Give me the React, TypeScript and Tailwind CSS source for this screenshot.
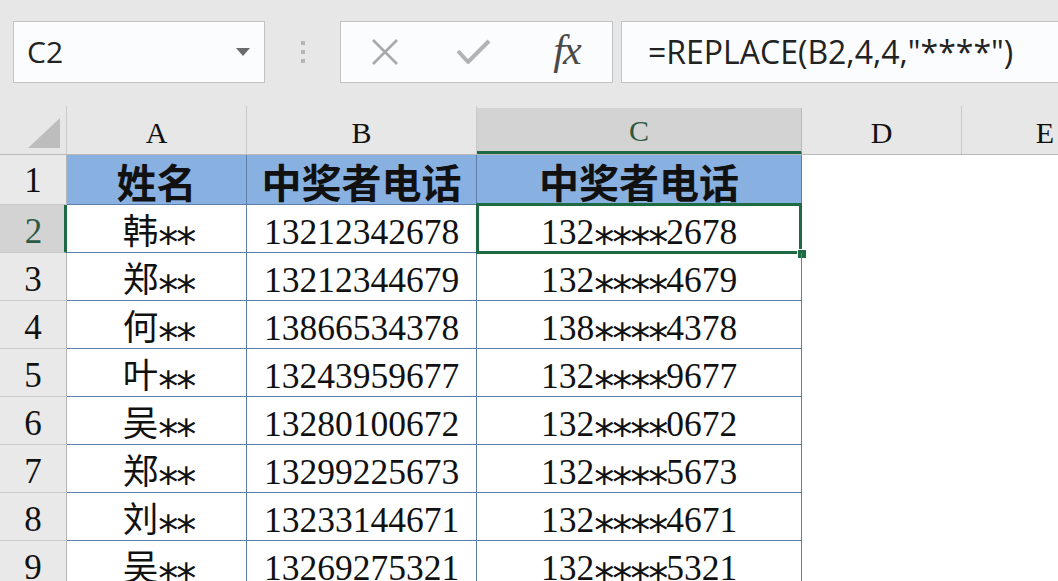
import React from "react";

const rows = [
  ["2", "韩**", "13212342678", "132****2678"],
  ["3", "郑**", "13212344679", "132****4679"],
  ["4", "何**", "13866534378", "138****4378"],
  ["5", "叶**", "13243959677", "132****9677"],
  ["6", "吴**", "13280100672", "132****0672"],
  ["7", "郑**", "13299225673", "132****5673"],
  ["8", "刘**", "13233144671", "132****4671"],
  ["9", "吴**", "13269275321", "132****5321"],
];

const serif = "font-['Liberation_Serif','Noto_Sans_CJK_SC',serif]";

function Toolbar() {
  return (
    <div className="h-[106px] shrink-0 bg-[#e7e7e7] flex items-start pt-[21px] pl-[13px]">
      <div className="w-[252px] h-[62px] bg-[#fbfcfd] border border-[#c3c3c3] flex items-center justify-between pl-[13px] pr-[14px]">
        <span className="font-['Open_Sans',sans-serif] text-[30px] text-[#222] leading-none">C2</span>
        <svg width="14" height="8" viewBox="0 0 14 8">
          <path d="M0 0 H14 L7 8 Z" fill="#6b6b6b" />
        </svg>
      </div>
      <div className="w-[75px] h-[62px] flex flex-col items-center justify-center gap-[5px]">
        <div className="w-[4px] h-[4px] bg-[#b5b5b5]" />
        <div className="w-[4px] h-[4px] bg-[#b5b5b5]" />
        <div className="w-[4px] h-[4px] bg-[#b5b5b5]" />
      </div>
      <div className="w-[273px] h-[62px] bg-[#fbfcfd] border border-[#c3c3c3] flex items-center">
        <div className="w-[88px] flex justify-center">
          <svg width="32" height="32" viewBox="0 0 32 32">
            <path d="M4 4 L28 28 M28 4 L4 28" stroke="#a9a9a9" strokeWidth="2.6" fill="none" />
          </svg>
        </div>
        <div className="w-[90px] flex justify-center">
          <svg width="36" height="30" viewBox="0 0 36 30">
            <path d="M2 14 L12 25 L33 4" stroke="#b3b3b3" strokeWidth="4" fill="none" strokeLinejoin="round" />
          </svg>
        </div>
        <div className="flex-1 flex justify-center pl-[2px]">
          <span className="font-['Liberation_Serif',serif] italic text-[42px] text-[#4a4a4a] leading-none tracking-[-2px] pb-[4px]">fx</span>
        </div>
      </div>
      <div className="ml-[8px] flex-1 h-[62px] bg-[#fbfcfd] border border-[#c3c3c3] border-r-0 flex items-center pl-[26px]">
        <span className="font-['Open_Sans',sans-serif] text-[32px] text-[#222] leading-none">=REPLACE(B2,4,4,"****")</span>
      </div>
    </div>
  );
}

function HeaderRow() {
  const cols = [
    { l: "A", w: "w-[180px]" },
    { l: "B", w: "w-[230px]" },
  ];
  return (
    <div className="flex h-[49px] shrink-0 bg-[#e7e7e7] border-b border-[#b9b9b9]">
      <div className="w-[67px] shrink-0 border-r border-[#c9c9c9] flex items-end justify-end pr-[6px] pb-[6px]">
        <svg width="32" height="30" viewBox="0 0 32 30">
          <path d="M32 0 L32 30 L0 30 Z" fill="#bdbdbd" />
        </svg>
      </div>
      {cols.map((c) => (
        <div key={c.l} className={`${c.w} shrink-0 border-r border-[#c9c9c9] flex items-center justify-center ${serif} text-[30px] text-[#111] pt-[4px]`}>
          {c.l}
        </div>
      ))}
      <div className={`w-[325px] shrink-0 mt-[2px] bg-[#d3d3d3] border-r border-[#b9b9b9] border-b-[3px] border-b-[#1e6b43] flex items-center justify-center ${serif} text-[30px] text-[#2a5a44] pt-[2px]`}>
        C
      </div>
      <div className={`w-[160px] shrink-0 border-r border-[#c9c9c9] flex items-center justify-center ${serif} text-[30px] text-[#111] pt-[4px]`}>
        D
      </div>
      <div className={`flex-1 flex items-center justify-end pr-[4px] ${serif} text-[30px] text-[#111] pt-[4px]`}>
        E
      </div>
    </div>
  );
}

function Stars({ s }: { s: string }) {
  const i = s.indexOf("*");
  const j = s.lastIndexOf("*");
  return (
    <>
      {s.slice(0, i)}
      <span className="relative top-[10px] font-['DejaVu_Sans',sans-serif] text-[40px] tracking-[-2px]">{s.slice(i, j + 1)}</span>
      {s.slice(j + 1)}
    </>
  );
}

const head = "shrink-0 bg-[#88b0e0] border-r border-b border-[#5d7ea8] flex items-center justify-center font-['Noto_Sans_CJK_SC',sans-serif] font-bold text-[40px] text-[#111] leading-none pt-[2px]";
const cell = `shrink-0 border-r border-b border-[#5d7ea8] flex items-center justify-center ${serif} text-[35.5px] text-[#111] leading-none pt-[8px]`;

export default function App() {
  return (
    <div className="w-[1058px] h-[581px] overflow-hidden bg-white flex flex-col">
      <Toolbar />
      <HeaderRow />
      <div className="flex h-[50px] shrink-0">
        <div className={`w-[67px] shrink-0 bg-[#e9e9e9] border-r border-[#b5b5b5] border-b border-b-[#c9c9c9] flex items-center justify-center ${serif} text-[35px] text-[#111] pt-[4px]`}>
          1
        </div>
        <div className={`w-[180px] ${head}`}>姓名</div>
        <div className={`w-[230px] ${head}`}>中奖者电话</div>
        <div className={`w-[325px] ${head}`}>中奖者电话</div>
        <div className="flex-1" />
      </div>
      {rows.map((r, idx) => {
        const sel = idx === 0;
        return (
          <div key={r[0]} className="flex h-[48px] shrink-0">
            <div
              className={`w-[67px] shrink-0 border-b border-b-[#c9c9c9] flex items-center justify-center ${serif} text-[35px] pt-[7px] ${
                sel ? "bg-[#d3d3d3] border-r-[3px] border-r-[#1e6b43] text-[#2a5a44] pl-[3px]" : "bg-[#e9e9e9] border-r border-r-[#b5b5b5] text-[#111]"
              }`}
            >
              {r[0]}
            </div>
            <div className={`w-[180px] ${cell} pl-[4px]`}>
              <Stars s={r[1]} />
            </div>
            <div className={`w-[230px] ${cell}`}>{r[2]}</div>
            <div className={`relative w-[325px] ${cell}`}>
              <Stars s={r[3]} />
              {sel && (
                <>
                  <div className="absolute left-[-1px] top-[-2px] right-[-1px] bottom-[-2px] border-[3px] border-[#1e6b43]" />
                  <div className="absolute right-[-6px] bottom-[-7px] w-[10px] h-[10px] bg-[#1e6b43] border border-white" />
                </>
              )}
            </div>
            <div className="flex-1" />
          </div>
        );
      })}
    </div>
  );
}
